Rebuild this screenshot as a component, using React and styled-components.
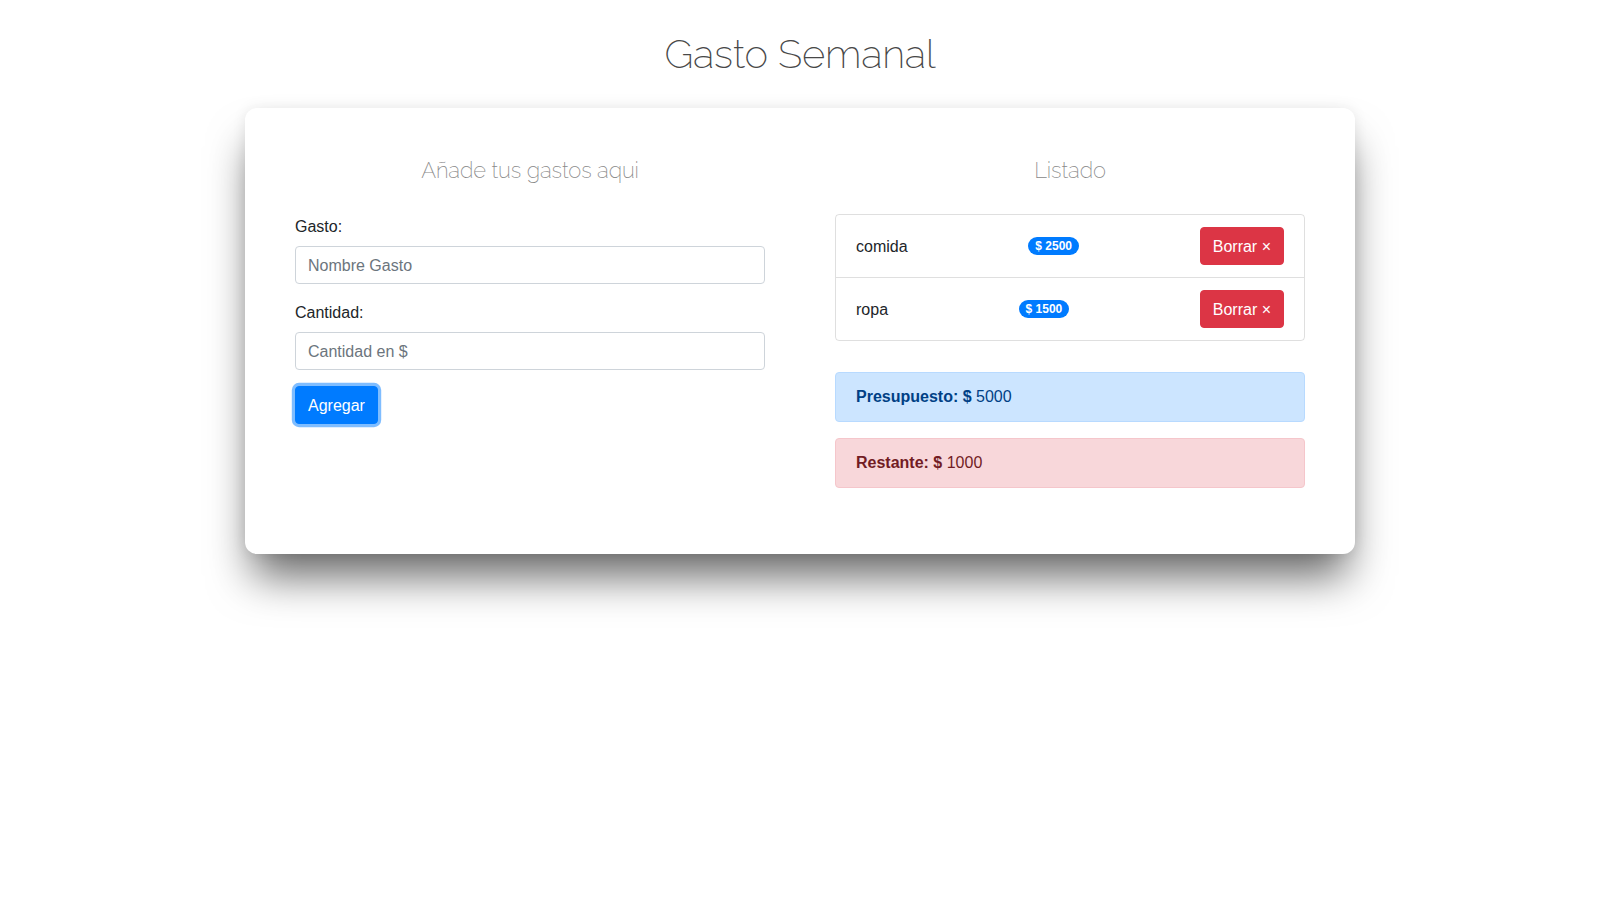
import React from "react";
import styled, { createGlobalStyle } from "styled-components";

const Global = createGlobalStyle`
  html, body { margin: 0; padding: 0; background: #fff; }
  body {
    font-family: "Segoe UI", "Liberation Sans", Arial, sans-serif;
    font-size: 16px;
    line-height: 1.5;
    color: #212529;
  }
  * { box-sizing: border-box; }
`;

const Page = styled.div`
  display: flex;
  flex-direction: column;
  align-items: center;
  padding-top: 30px;
  min-height: 100vh;
`;

const Title = styled.h1`
  margin: 0 0 30px;
  font-family: "Raleway", "Open Sans", sans-serif;
  font-weight: 200;
  font-size: 40px;
  line-height: 48px;
  color: #484848;
  letter-spacing: -0.2px;
`;

const Card = styled.main`
  width: 1110px;
  background: #fff;
  border-radius: 12px;
  padding: 50px;
  display: grid;
  grid-template-columns: 1fr 1fr;
  column-gap: 70px;
  box-shadow: 0 30px 44px -8px rgba(0, 0, 0, 0.6), 0 0 14px rgba(0, 0, 0, 0.08);
`;

const Column = styled.section`
  display: flex;
  flex-direction: column;
`;

const SubTitle = styled.h2`
  margin: 0 0 31px;
  text-align: center;
  font-family: "Raleway", "Open Sans", sans-serif;
  font-weight: 200;
  font-size: 22px;
  line-height: 25px;
  color: #888;
  letter-spacing: -0.1px;
`;

const FormGroup = styled.div`
  display: flex;
  flex-direction: column;
  margin-bottom: 16px;
`;

const Label = styled.label`
  padding-top: 1px;
  margin-bottom: 7px;
  line-height: 24px;
`;

const Input = styled.input`
  height: 38px;
  padding: 7px 12px 5px;
  font: inherit;
  color: #495057;
  border: 1px solid #ced4da;
  border-radius: 4px;
  background: #fff;
  &::placeholder { color: #6c757d; }
`;

const Button = styled.button`
  font: inherit;
  line-height: 24px;
  padding: 7px 12px 5px;
  border-radius: 4px;
  border: 1px solid ${(p) => (p.$danger ? "#dc3545" : "#007bff")};
  background: ${(p) => (p.$danger ? "#dc3545" : "#007bff")};
  color: #fff;
  cursor: pointer;
  align-self: ${(p) => (p.$danger ? "center" : "flex-start")};
  box-shadow: ${(p) => (p.$focus ? "0 0 0 3.2px rgba(0,123,255,0.5)" : "none")};
`;

const List = styled.ul`
  list-style: none;
  margin: 0 0 31px;
  padding: 0;
  border: 1px solid rgba(0, 0, 0, 0.125);
  border-radius: 4px;
`;

const Item = styled.li`
  display: flex;
  align-items: center;
  justify-content: space-between;
  padding: 12px 20px;
  & + & { border-top: 1px solid rgba(0, 0, 0, 0.125); }
`;

const ItemName = styled.span`
  padding-top: 2px;
`;

const Badge = styled.span`
  display: inline-block;
  padding: 3px 7px 3px;
  font-size: 12px;
  font-weight: 700;
  line-height: 1;
  color: #fff;
  background: #007bff;
  border-radius: 10rem;
`;

const Alert = styled.div`
  padding: 12px 20px;
  margin-bottom: 16px;
  border: 1px solid ${(p) => (p.$kind === "danger" ? "#f5c6cb" : "#b8daff")};
  background: ${(p) => (p.$kind === "danger" ? "#f8d7da" : "#cce5ff")};
  color: ${(p) => (p.$kind === "danger" ? "#721c24" : "#004085")};
  border-radius: 4px;
  line-height: 24px;
`;

const gastos = [
  { id: 1, nombre: "comida", cantidad: 2500 },
  { id: 2, nombre: "ropa", cantidad: 1500 },
];

export default function App() {
  return (
    <>
      <Global />
      <Page>
        <Title>Gasto Semanal</Title>
        <Card>
          <Column>
            <SubTitle>Añade tus gastos aqui</SubTitle>
            <FormGroup>
              <Label>Gasto:</Label>
              <Input type="text" placeholder="Nombre Gasto" />
            </FormGroup>
            <FormGroup>
              <Label>Cantidad:</Label>
              <Input type="text" placeholder="Cantidad en $" />
            </FormGroup>
            <Button $focus>Agregar</Button>
          </Column>
          <Column>
            <SubTitle>Listado</SubTitle>
            <List>
              {gastos.map((g) => (
                <Item key={g.id}>
                  <ItemName>{g.nombre}</ItemName>
                  <Badge>$ {g.cantidad}</Badge>
                  <Button $danger>Borrar &times;</Button>
                </Item>
              ))}
            </List>
            <Alert>
              <strong>Presupuesto: $</strong> 5000
            </Alert>
            <Alert $kind="danger">
              <strong>Restante: $</strong> 1000
            </Alert>
          </Column>
        </Card>
      </Page>
    </>
  );
}
